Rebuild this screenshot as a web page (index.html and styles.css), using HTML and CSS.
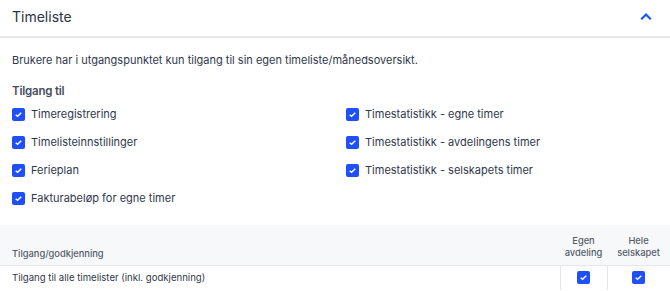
FILE: index.html
```html
<!DOCTYPE html>
<html lang="no">
<head>
  <meta charset="UTF-8" />
  <meta name="viewport" content="width=device-width, initial-scale=1.0"/>
  <title>Timeliste</title>
  <link rel="stylesheet" href="styles.css">
</head>
<body>

  <header class="panel-head">
    <h1>Timeliste</h1>
    <svg class="chevron" width="12" height="8" viewBox="0 0 12 8">
      <path d="M2 6.5 L6 2.5 L10 6.5" fill="none" stroke="#1a55ff" stroke-width="2.2" stroke-linecap="square"/>
    </svg>
  </header>

  <main>
    <p class="intro">Brukere har i utgangspunktet kun tilgang til sin egen timeliste/månedsoversikt.</p>

    <h2>Tilgang til</h2>
    <div class="perm-grid">
      <label class="perm"><span class="check"><svg viewBox="0 0 14 14"><path d="M4 7.2 L6 9 L10 5"/></svg></span>Timeregistrering</label>
      <label class="perm"><span class="check"><svg viewBox="0 0 14 14"><path d="M4 7.2 L6 9 L10 5"/></svg></span>Timestatistikk - egne timer</label>
      <label class="perm"><span class="check"><svg viewBox="0 0 14 14"><path d="M4 7.2 L6 9 L10 5"/></svg></span>Timelisteinnstillinger</label>
      <label class="perm"><span class="check"><svg viewBox="0 0 14 14"><path d="M4 7.2 L6 9 L10 5"/></svg></span>Timestatistikk - avdelingens timer</label>
      <label class="perm"><span class="check"><svg viewBox="0 0 14 14"><path d="M4 7.2 L6 9 L10 5"/></svg></span>Ferieplan</label>
      <label class="perm"><span class="check"><svg viewBox="0 0 14 14"><path d="M4 7.2 L6 9 L10 5"/></svg></span>Timestatistikk - selskapets timer</label>
      <label class="perm"><span class="check"><svg viewBox="0 0 14 14"><path d="M4 7.2 L6 9 L10 5"/></svg></span>Fakturabeløp for egne timer</label>
    </div>

    <table class="access">
      <thead>
        <tr>
          <th class="name">Tilgang/godkjenning</th>
          <th class="col col-dept">Egen<br>avdeling</th>
          <th class="col col-all">Hele<br>selskapet</th>
        </tr>
      </thead>
      <tbody>
        <tr>
          <td class="name">Tilgang til alle timelister (inkl. godkjenning)</td>
          <td class="col"><span class="check"><svg viewBox="0 0 14 14"><path d="M4 7.2 L6 9 L10 5"/></svg></span></td>
          <td class="col"><span class="check"><svg viewBox="0 0 14 14"><path d="M4 7.2 L6 9 L10 5"/></svg></span></td>
        </tr>
      </tbody>
    </table>
  </main>

</body>
</html>
```

FILE: styles.css
```css
* {
  box-sizing: border-box;
  margin: 0;
  padding: 0;
  font-family: Inter, 'Noto Sans', sans-serif;
}

body {
  background-color: white;
  color: #30384a;
}

.panel-head {
  display: flex;
  justify-content: space-between;
  align-items: center;
  height: 38px;
  padding: 0 18px 4px 12px;
  border-bottom: 2px solid #e6e8ec;
}

h1 {
  font-size: 14px;
  font-weight: 400;
  color: #2b3345;
}

.chevron {
  display: block;
}

.intro {
  font-size: 11px;
  padding: 14px 12px 0;
  line-height: 16px;
}

h2 {
  font-size: 11.5px;
  font-weight: 600;
  color: #474e5c;
  letter-spacing: -0.2px;
  padding: 14px 12px 0;
  line-height: 18px;
}

.perm-grid {
  display: grid;
  grid-template-columns: 334px 1fr;
  row-gap: 12px;
  padding: 6px 12px 0;
}

.perm {
  display: flex;
  align-items: center;
  gap: 6px;
  font-size: 11px;
  height: 16px;
}

.check {
  display: inline-block;
  width: 13px;
  height: 13px;
  background-color: #1f4ff6;
  border-radius: 2px;
  flex-shrink: 0;
}

.check svg {
  display: block;
  width: 13px;
  height: 13px;
}

.check path {
  fill: none;
  stroke: white;
  stroke-width: 1.5;
}

.access {
  width: 100%;
  margin-top: 19px;
  border-collapse: collapse;
}

.access thead tr {
  background-color: #f7f8fa;
}

.access th {
  height: 40px;
  font-size: 9.3px;
  font-weight: 500;
  color: #555c68;
  line-height: 12px;
  vertical-align: bottom;
  padding-bottom: 6px;
  border-bottom: 1px solid #e5e7eb;
}

.access th.name {
  text-align: left;
  padding-left: 12px;
  padding-bottom: 5px;
}

.access .col {
  text-align: center;
}

.col-dept {
  width: 47px;
}

.col-all {
  width: 63px;
}

.access td {
  height: 25px;
  font-size: 9.6px;
}

.access td.name {
  padding-left: 12px;
}

.access td.col {
  border-left: 1px solid #e5e7eb;
}

.access td .check {
  vertical-align: middle;
}
```
